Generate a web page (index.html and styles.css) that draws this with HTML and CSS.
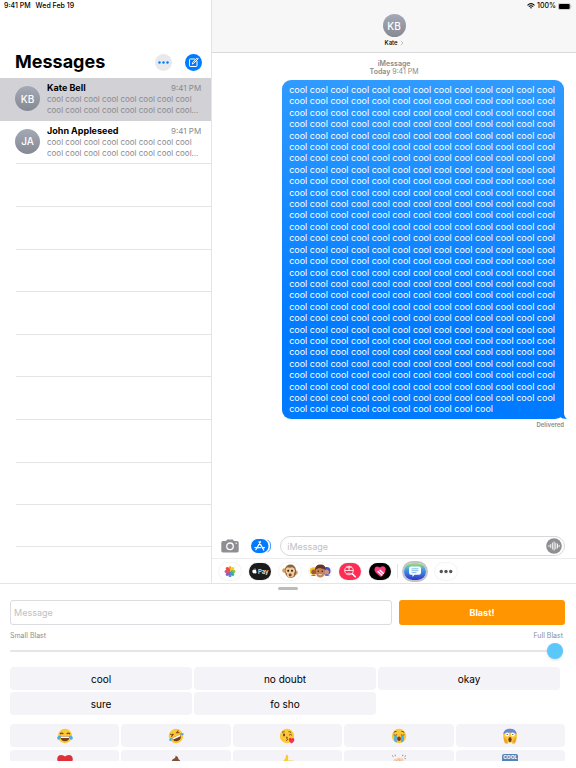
FILE: index.html
```html
<!DOCTYPE html>
<html lang="en">
<head>
    <meta charset="UTF-8">
    <meta name="viewport" content="width=device-width, initial-scale=1.0">
    <title>Messages</title>
    <link rel="stylesheet" href="styles.css">
</head>
<body>
    <main class="messages">
        <aside class="sidebar">
            <div class="status">
                <span>9:41 PM</span>
                <span>Wed Feb 19</span>
            </div>
            <div class="sidebar-header">
                <h1>Messages</h1>
                <button class="round-button more" aria-label="More">
                    <svg viewBox="0 0 17 17"><g fill="#007aff"><circle cx="4.5" cy="8.5" r="1.2"/><circle cx="8.5" cy="8.5" r="1.2"/><circle cx="12.5" cy="8.5" r="1.2"/></g></svg>
                </button>
                <button class="round-button compose" aria-label="New message">
                    <svg viewBox="0 0 17 17"><g fill="none" stroke="#fff" stroke-width="1" stroke-linecap="round" stroke-linejoin="round"><path d="M9.8 5H5.2q-.7 0-.7.7v6.1q0 .7.7.7h6.1q.7 0 .7-.7V7.4"/><path d="M7.4 9.7l.4-1.3 4.5-4.5.9.9-4.5 4.5z"/></g></svg>
                </button>
            </div>
            <div class="chat-list">
                <a class="chat selected" href="#kate">
                    <span class="avatar">KB</span>
                    <span class="chat-text">
                        <span class="chat-top"><b>Kate Bell</b><time>9:41 PM</time></span>
                        <span class="preview">cool cool cool cool cool cool cool cool<br>cool cool cool cool cool cool cool cool…</span>
                    </span>
                </a>
                <a class="chat" href="#john">
                    <span class="avatar">JA</span>
                    <span class="chat-text">
                        <span class="chat-top"><b>John Appleseed</b><time>9:41 PM</time></span>
                        <span class="preview">cool cool cool cool cool cool cool cool<br>cool cool cool cool cool cool cool cool…</span>
                    </span>
                </a>
                <div class="empty-row"></div>
                <div class="empty-row"></div>
                <div class="empty-row"></div>
                <div class="empty-row"></div>
                <div class="empty-row"></div>
                <div class="empty-row"></div>
                <div class="empty-row"></div>
                <div class="empty-row"></div>
                <div class="empty-row"></div>
            </div>
        </aside>

        <section class="conversation">
            <header class="conversation-header">
                <div class="status status-right">
                    <svg class="wifi" viewBox="0 0 8 6"><g fill="none" stroke="#000" stroke-width="1.1"><path d="M.5 2.3q3.5-3.2 7 0"/><path d="M1.8 3.7q2.2-1.9 4.4 0"/></g><path d="M2.9 4.6q1.1-.9 2.2 0L4 5.8z"/></svg>
                    <span>100%</span>
                    <svg class="battery" viewBox="0 0 14 7"><rect x=".3" y=".3" width="12" height="6.4" rx="1.6" fill="none" stroke="#999" stroke-width=".5"/><rect x=".9" y=".9" width="10.8" height="5.2" rx="1.1"/><path d="M13 2.4q.9 1.1 0 2.2z" fill="#999"/></svg>
                </div>
                <span class="avatar">KB</span>
                <a class="contact" href="#kate">Kate
                    <svg viewBox="0 0 4 6"><path d="M.8.8L3 3 .8 5.2" fill="none" stroke="#aaa" stroke-width=".7"/></svg>
                </a>
            </header>

            <div class="thread">
                <p class="stamp"><b>iMessage</b><br><b>Today</b> 9:41 PM</p>
                <div class="bubble">
                    <span>cool cool cool cool cool cool cool cool cool cool cool cool cool</span>
                    <span>cool cool cool cool cool cool cool cool cool cool cool cool cool</span>
                    <span>cool cool cool cool cool cool cool cool cool cool cool cool cool</span>
                    <span>cool cool cool cool cool cool cool cool cool cool cool cool cool</span>
                    <span>cool cool cool cool cool cool cool cool cool cool cool cool cool</span>
                    <span>cool cool cool cool cool cool cool cool cool cool cool cool cool</span>
                    <span>cool cool cool cool cool cool cool cool cool cool cool cool cool</span>
                    <span>cool cool cool cool cool cool cool cool cool cool cool cool cool</span>
                    <span>cool cool cool cool cool cool cool cool cool cool cool cool cool</span>
                    <span>cool cool cool cool cool cool cool cool cool cool cool cool cool</span>
                    <span>cool cool cool cool cool cool cool cool cool cool cool cool cool</span>
                    <span>cool cool cool cool cool cool cool cool cool cool cool cool cool</span>
                    <span>cool cool cool cool cool cool cool cool cool cool cool cool cool</span>
                    <span>cool cool cool cool cool cool cool cool cool cool cool cool cool</span>
                    <span>cool cool cool cool cool cool cool cool cool cool cool cool cool</span>
                    <span>cool cool cool cool cool cool cool cool cool cool cool cool cool</span>
                    <span>cool cool cool cool cool cool cool cool cool cool cool cool cool</span>
                    <span>cool cool cool cool cool cool cool cool cool cool cool cool cool</span>
                    <span>cool cool cool cool cool cool cool cool cool cool cool cool cool</span>
                    <span>cool cool cool cool cool cool cool cool cool cool cool cool cool</span>
                    <span>cool cool cool cool cool cool cool cool cool cool cool cool cool</span>
                    <span>cool cool cool cool cool cool cool cool cool cool cool cool cool</span>
                    <span>cool cool cool cool cool cool cool cool cool cool cool cool cool</span>
                    <span>cool cool cool cool cool cool cool cool cool cool cool cool cool</span>
                    <span>cool cool cool cool cool cool cool cool cool cool cool cool cool</span>
                    <span>cool cool cool cool cool cool cool cool cool cool cool cool cool</span>
                    <span>cool cool cool cool cool cool cool cool cool cool cool cool cool</span>
                    <span>cool cool cool cool cool cool cool cool cool cool cool cool cool</span>
                    <span>cool cool cool cool cool cool cool cool cool cool</span>
                    <svg class="tail" viewBox="0 0 10 9"><path d="M7 0v4q.5 3.500 3 4.700Q6 9.200 3.500 7.200L0 8V0z" fill="#007aff"/></svg>
                </div>
                <p class="delivered">Delivered</p>
            </div>

            <div class="compose-bar">
                <button class="icon-button camera" aria-label="Camera">
                    <svg viewBox="0 0 18 14"><path d="M2 2h3l1.200-1.600h5.600L13 2h3q1.700 0 1.700 1.700v8q0 1.700-1.700 1.700H2Q.3 13.400.3 11.700v-8Q.3 2 2 2z" fill="#8e8e93"/><circle cx="9" cy="7.300" r="3.300" fill="none" stroke="#fff" stroke-width="1.300"/><circle cx="15.200" cy="4.200" r=".7" fill="#fff"/></svg>
                </button>
                <button class="icon-button store" aria-label="Apps">
                    <svg viewBox="0 0 20 14"><rect width="17.500" height="14" rx="7" fill="#007aff"/><path d="M16.500.8q3.200 2 3.200 6.200t-3.200 6.200" fill="none" stroke="#007aff" stroke-width=".8"/><g stroke="#fff" stroke-width="1.300" stroke-linecap="round" fill="none"><path d="M9.500 2.800L5.700 9.400M8 2.800l3.900 6.800M4 8.600h5.500M11.700 8.600h1.800M4.900 10.700l.2-.3M12.500 10.700l.2.300"/></g></svg>
                </button>
                <div class="message-field">
                    <input type="text" placeholder="iMessage" aria-label="iMessage">
                    <button class="icon-button audio" aria-label="Record audio">
                        <svg viewBox="0 0 16 16"><circle cx="8" cy="8" r="7.800" fill="#8e8e93"/><g stroke="#fff" stroke-width=".9" stroke-linecap="round"><path d="M3 7.500v1M4.700 6.500v3M6.400 5v6M8.100 3.800v8.400M9.800 5.200v5.600M11.500 6v4M13.100 7.300v1.400"/></g></svg>
                    </button>
                </div>
            </div>

            <nav class="app-strip">
                <button class="app" aria-label="Photos">
                    <svg viewBox="0 0 22 17"><ellipse cx="11" cy="5.600" rx="1.700" ry="2.700" fill="#ff9c1a"/><ellipse cx="11" cy="5.600" rx="1.700" ry="2.700" fill="#f7cf25" transform="rotate(45 11 8.500)"/><ellipse cx="11" cy="5.600" rx="1.700" ry="2.700" fill="#8ac249" transform="rotate(90 11 8.500)"/><ellipse cx="11" cy="5.600" rx="1.700" ry="2.700" fill="#42b08c" transform="rotate(135 11 8.500)"/><ellipse cx="11" cy="5.600" rx="1.700" ry="2.700" fill="#4a90e2" transform="rotate(180 11 8.500)"/><ellipse cx="11" cy="5.600" rx="1.700" ry="2.700" fill="#8463bd" transform="rotate(225 11 8.500)"/><ellipse cx="11" cy="5.600" rx="1.700" ry="2.700" fill="#d0598e" transform="rotate(270 11 8.500)"/><ellipse cx="11" cy="5.600" rx="1.700" ry="2.700" fill="#ef4c3c" transform="rotate(315 11 8.500)"/></svg>
                </button>
                <button class="app pay" aria-label="Apple Pay">
                    <svg viewBox="0 0 6 7"><path d="M3 1.900q1.500-.7 2.400.3-1.500 1.200.3 2.500Q4.900 6.800 4 6.500q-.9-.4-1.800 0Q.8 6.500.4 4.200.2 1.500 3 1.900zM2.900 1.500Q3 .2 4.200 0q0 1.300-1.300 1.500z" fill="#fff"/></svg>Pay
                </button>
                <button class="app" aria-label="Animoji">
                    <svg viewBox="0 0 22 17"><circle cx="5.500" cy="7.500" r="2.300" fill="#d69a60"/><circle cx="16.500" cy="9.500" r="2.300" fill="#d69a60"/><path d="M6 6q1-4.500 5.500-4.500T17 7q.7 4-1.300 6.500-3.200 2.700-7 .5Q5.500 11.500 6 6z" fill="#8a6240"/><path d="M6.500 7q.7-4 4.200-2.300 4.500-1.700 5.300 2.300 0 2-.8 3.200 0 4.300-3.800 4.300-3.900 0-3.600-4.100Q6 9 6.500 7z" fill="#f1cb96"/><circle cx="9.200" cy="7.700" r="1" fill="#261b12"/><circle cx="13" cy="7.700" r="1" fill="#261b12"/><ellipse cx="11.200" cy="12" rx="1.500" ry="1.400" fill="#843b32"/></svg>
                </button>
                <button class="app" aria-label="Memoji">
                    <svg viewBox="0 0 22 17"><circle cx="4.500" cy="8" r="3.800" fill="#f7bf25"/><circle cx="4.800" cy="9" r="2.500" fill="#9c5b35"/><circle cx="17.600" cy="8" r="3.900" fill="#4949d2"/><circle cx="17.500" cy="9" r="2.500" fill="#cf986e"/><path d="M1.500 13q3-2 6 0zM15 13q3-2 6 0z" fill="#5d65cf"/><path d="M6 7q0-5.500 5.500-5.500T16.500 7z" fill="#63362a"/><path d="M7 6q4-2 8.500 0v4.200q-.8 4.300-4.200 4.300T7 10.200z" fill="#c68255"/><path d="M6.500 5.500Q8 1.500 12 2q4 .3 4 4-4-.3-6-1.500Q9 6 6.500 5.500z" fill="#61332a"/><circle cx="9.300" cy="8.200" r=".7" fill="#25160e"/><circle cx="13.200" cy="8.200" r=".7" fill="#25160e"/><path d="M9.200 11q2 .8 4.100 0-2 2.400-4.100 0z" fill="#fff"/></svg>
                </button>
                <button class="app images" aria-label="Images">
                    <svg viewBox="0 0 22 17"><g fill="none" stroke="#fff" stroke-width=".8"><circle cx="10" cy="7.500" r="4.300"/><path d="M5.700 7.500h8.600M10 3.200v4.300M7.500 4q2.500 1.800 5 0M7.500 11q2.500-1.800 5 0"/><path d="M13.300 10.800l3 3" stroke-width="1.500" stroke-linecap="round"/></g></svg>
                </button>
                <button class="app touch" aria-label="Digital Touch">
                    <svg viewBox="0 0 22 17"><path d="M12 14Q4.500 9 5.500 5.800 7 2 10.700 4.600 15 1.500 16.600 5.300 17.500 9.500 12 14z" fill="#ff397f"/><path d="M9 8.500l3.800 3.500M11 7.200l3.200 3" stroke="#fff" stroke-width="1.500" stroke-linecap="round"/></svg>
                </button>
                <span class="divider"></span>
                <button class="app blast" aria-label="Message Blast">
                    <svg viewBox="0 0 22 17"><path d="M7 3.500h8q2 0 2 2v4.300q0 2-2 2h-4.500L8.500 14v-2.200H7q-2 0-2-2V5.500q0-2 2-2z" fill="#fff"/><path d="M7.500 5.800h7M7.500 7.700h7M7.500 9.600h5" stroke="#5babe5" stroke-width=".8"/></svg>
                </button>
                <button class="app" aria-label="More apps">
                    <svg viewBox="0 0 22 17"><g fill="#55555a"><circle cx="6.300" cy="8.500" r="1.700"/><circle cx="11" cy="8.500" r="1.700"/><circle cx="15.700" cy="8.500" r="1.700"/></g></svg>
                </button>
            </nav>
        </section>
    </main>

    <section class="panel">
        <div class="grabber"></div>
        <div class="send-row">
            <input class="blast-text" type="text" placeholder="Message" aria-label="Message">
            <button class="send">Blast!</button>
        </div>
        <div class="slider">
            <div class="slider-labels">
                <label for="size">Small Blast</label>
                <label for="size">Full Blast</label>
            </div>
            <input type="range" id="size" min="0" max="100" value="100">
        </div>
        <div class="words">
            <button>cool</button>
            <button>no doubt</button>
            <button>okay</button>
            <button>sure</button>
            <button>fo sho</button>
        </div>
        <div class="emojis">
            <button aria-label="Tears of joy">
                <svg viewBox="0 0 16 16"><circle cx="8" cy="8" r="7.200" fill="#fdc835"/><path d="M3 6.200q1.500-2 3.300-.2M9.700 6q1.800-1.800 3.300.2" fill="none" stroke="#77451b" stroke-width="1.100"/><path d="M3.200 8.300h9.600q-.5 5-4.800 5t-4.800-5z" fill="#77401e"/><path d="M3.600 8.500h8.800l-.4 1.600H4z" fill="#fff"/><path d="M3.600 7.500Q-.5 8 .3 10.700q1.200 2 2.700.3 1-1.500.6-3.500zM12.400 7.500q4.100.5 3.300 3.200-1.200 2-2.700.3-1-1.500-.6-3.500z" fill="#48aee8"/></svg>
            </button>
            <button aria-label="Rolling laughing">
                <svg viewBox="0 0 16 16"><g transform="rotate(-25 8 8)"><circle cx="8" cy="8" r="7.200" fill="#fdc835"/><path d="M3.500 4l2.600 1.300-2.600 1.300M12.500 4L9.900 5.300l2.600 1.300" fill="none" stroke="#77451b" stroke-width="1"/><path d="M3.200 8.300h9.600q-.5 5-4.800 5t-4.800-5z" fill="#77401e"/><path d="M3.600 8.500h8.800l-.4 1.600H4z" fill="#fff"/><path d="M3.600 7.500Q-.5 7.400.2 9.800q1.800 1.500 3.400-2.300zM12.400 7.500q4.100-.1 3.400 2.300-1.800 1.500-3.400-2.300z" fill="#48aee8"/></g></svg>
            </button>
            <button aria-label="Kiss">
                <svg viewBox="0 0 16 16"><circle cx="8" cy="8" r="7.200" fill="#fdc835"/><path d="M3 4.500q1-1.200 2.600-.7M9.500 3.800q1.600-.4 2.600.8M10 7.200q1.500-1.500 3 0" fill="none" stroke="#77451b" stroke-width=".9"/><ellipse cx="5" cy="7" rx="1" ry="1.400" fill="#6a391a"/><path d="M7 9q2.300.2 1 1.500 1.800 1.200-.8 2" fill="none" stroke="#77401e" stroke-width="1"/><path d="M12.300 15.500Q8.800 12 10.200 10.200q1.300-1 2.300.5 1.500-1.500 2.800.2.700 2.200-3 4.600z" fill="#ef334e"/></svg>
            </button>
            <button aria-label="Loudly crying">
                <svg viewBox="0 0 16 16"><circle cx="8" cy="8" r="7.200" fill="#fdc835"/><path d="M2.800 4.500q1.200-1.200 2.800-1.100M13.200 4.500Q12 3.300 10.400 3.400M2.700 6.800q1.700 1 3.400 0M9.900 6.800q1.700 1 3.400 0" fill="none" stroke="#77451b" stroke-width="1"/><path d="M3.200 7.300h2.600v7.300q-1.500-.6-2.600-1.700zM10.200 7.300h2.600v5.600q-1.100 1.100-2.600 1.700z" fill="#48aee8"/><ellipse cx="8" cy="10.800" rx="1.900" ry="2.300" fill="#77401e"/></svg>
            </button>
            <button aria-label="Screaming">
                <svg viewBox="0 0 16 16"><circle cx="8" cy="7.800" r="7" fill="#fdc835"/><path d="M1.200 6Q2 .8 8 .8T14.800 6q-3-1.500-6.800-1.500T1.200 6z" fill="#6688dd"/><circle cx="5.200" cy="6.500" r="1.900" fill="#fff"/><circle cx="10.800" cy="6.500" r="1.900" fill="#fff"/><circle cx="5.200" cy="6.500" r=".6" fill="#222"/><circle cx="10.800" cy="6.500" r=".6" fill="#222"/><ellipse cx="8" cy="11.400" rx="1.600" ry="2.500" fill="#68351d"/><path d="M1.500 9q2 .2 3.500 3.200L6 15.500H3.200Q1.500 13 1.500 9zM14.500 9q-2 .2-3.500 3.200l-1 3.300h2.800q1.700-2.500 1.700-6.500z" fill="#efa52b"/></svg>
            </button>
            <button aria-label="Heart">
                <svg viewBox="0 0 16 16"><path d="M8 15Q.3 9.500.2 5 .5 1 4.200 1 6.800 1 8 2.500 9.200 1 11.800 1q3.700 0 4 4Q15.700 9.500 8 15z" fill="#df3039"/></svg>
            </button>
            <button aria-label="Poop">
                <svg viewBox="0 0 16 16"><path d="M7.500 1.500q3.300 1.200 3 3.800 2 .8 1.700 3 3 1 2.300 4-1 2.500-6.500 2.500t-6.500-2.500q-.5-3 2.300-4-.4-2.700 2-3.500Q8 4 7.500 1.500z" fill="#80503b"/><circle cx="6" cy="8.500" r="1.300" fill="#fff"/><circle cx="10" cy="8.500" r="1.300" fill="#fff"/></svg>
            </button>
            <button aria-label="Thumbs up">
                <svg viewBox="0 0 16 16"><path d="M7 1q2-.6 2.200 1.600.2 2-.6 3.900h4.800q1.700.5 1.200 2.500.3 5-2.600 5.500H6.500L2 13V8l3-1.500Q7.200 4 7 1z" fill="#fdc835"/></svg>
            </button>
            <button aria-label="Clap">
                <svg viewBox="0 0 16 16"><path d="M1 1.500l1.500 1.200M4 .7l.5 1.500M12 .7l-.5 1.500M15 1.500l-1.500 1.200M14.800 4.500l-1.300.2" stroke="#777" stroke-width=".8"/><path d="M2 7.500Q3 4 5 5l3-1.800 1.500 1.300 2-.4 2.500 5q.5 5-4 6-4.500.5-6.500-3.500z" fill="#f7cfae"/><path d="M5 6l4 4M7.500 5l3.500 4M3.500 8.500l3.500 4" stroke="#dba17d" stroke-width=".7"/></svg>
            </button>
            <button class="cool-badge" aria-label="Cool"><span><b>COOL</b></span></button>
        </div>
    </section>
</body>
</html>
```
FILE: styles.css
```css
* {
    box-sizing: border-box;
}

body {
    font-family: Inter, "Liberation Sans", sans-serif;
    background-color: #fff;
    color: #000;
    margin: 0;
    height: 100vh;
    display: flex;
    flex-direction: column;
    overflow: hidden;
}

h1, p {
    margin: 0;
}

button, input {
    font-family: inherit;
    margin: 0;
}

button {
    border: none;
    padding: 0;
    background: none;
    color: #000;
}

svg {
    display: block;
}

a {
    color: inherit;
    text-decoration: none;
}

.messages {
    flex: 1;
    min-height: 0;
    display: grid;
    grid-template-columns: 7fr 12fr;
}

/* Left column */
.sidebar {
    display: flex;
    flex-direction: column;
    border-right: 1px solid #e4e4e6;
}

.status {
    display: flex;
    gap: 5px;
    height: 12px;
    padding: 0 4px;
    font-size: 7px;
    line-height: 12px;
    font-weight: 500;
}

.sidebar-header {
    display: flex;
    align-items: center;
    gap: 13px;
    padding: 38px 9px 4px 15px;
}

.sidebar-header h1 {
    flex: 1;
    font-size: 18px;
    line-height: 24px;
}

.round-button {
    width: 17px;
    height: 17px;
    border-radius: 50%;
}

.more {
    background-color: #e9e9eb;
}

.compose {
    background-color: #007aff;
}

.chat-list {
    flex: 1;
    display: grid;
    grid-template-rows: repeat(11, 1fr);
    padding-bottom: 36px;
}

.chat {
    display: flex;
    gap: 7px;
    padding: 4px 10px 0 15px;
}

.selected {
    background-color: #d1d1d6;
}

.avatar {
    display: flex;
    align-items: center;
    justify-content: center;
    width: 25px;
    height: 25px;
    border-radius: 50%;
    background: linear-gradient(#a4a9b7, #858993);
    color: #fff;
    font-size: 10px;
    font-weight: 500;
}

.chat .avatar {
    margin-top: 4px;
}

.chat-text {
    flex: 1;
    font-size: 8px;
    line-height: 11px;
    color: #8a8a8e;
}

.chat-top {
    display: flex;
    justify-content: space-between;
    line-height: 12px;
}

.chat-top b {
    font-size: 9px;
    font-weight: 700;
    color: #000;
}

.preview {
    display: block;
    white-space: nowrap;
}

.empty-row {
    margin-left: 16px;
    border-top: 1px solid #e4e4e6;
}

.empty-row:last-child {
    border-bottom: 1px solid #e4e4e6;
}

/* Right column */
.conversation {
    display: flex;
    flex-direction: column;
    min-width: 0;
}

.conversation-header {
    display: flex;
    flex-direction: column;
    align-items: center;
    height: 53px;
    background-color: #f7f7f7;
    border-bottom: 1px solid #d9d9db;
}

.conversation-header .avatar {
    width: 23px;
    height: 23px;
    margin-top: 2px;
}

.status-right {
    align-self: flex-end;
    align-items: center;
    gap: 2px;
}

.wifi {
    width: 8px;
    height: 6px;
}

.battery {
    width: 14px;
    height: 7px;
}

.contact {
    display: flex;
    align-items: center;
    gap: 2px;
    font-size: 6px;
    line-height: 12px;
    font-weight: 500;
}

.contact svg {
    width: 4px;
    height: 6px;
}

.thread {
    flex: 1;
    display: flex;
    flex-direction: column;
    padding: 7px 12px 105px;
}

.stamp {
    margin-bottom: 4px;
    text-align: center;
    color: #8a8a8e;
    font-size: 7px;
    line-height: 8px;
}

.stamp b {
    font-weight: 600;
}

.bubble {
    flex: 1;
    align-self: flex-end;
    position: relative;
    display: flex;
    flex-direction: column;
    padding: 4px 9px 4px 7px;
    border-radius: 9px;
    background: linear-gradient(#2f9bff, #007aff 75%);
    color: #fff;
    font-size: 9px;
    line-height: 11px;
    white-space: nowrap;
}

.bubble span {
    flex: 1;
}

.tail {
    position: absolute;
    right: -3px;
    bottom: 0;
    width: 10px;
    height: 9px;
}

.delivered {
    text-align: right;
    color: #8a8a8e;
    font-size: 6px;
    line-height: 12px;
    font-weight: 600;
}

.compose-bar {
    display: flex;
    align-items: center;
    gap: 12px;
    padding: 0 11px 2px 9px;
}

.camera svg {
    width: 18px;
    height: 14px;
}

.store svg {
    width: 20px;
    height: 14px;
}

.message-field {
    flex: 1;
    display: flex;
    align-items: center;
    height: 20px;
    margin-left: -3px;
    padding: 0 2px 0 6px;
    border: 1px solid #d8d8dc;
    border-radius: 10px;
}

.message-field input {
    flex: 1;
    min-width: 0;
    border: none;
    padding: 0;
    font-size: 9px;
    outline: none;
}

input::placeholder {
    color: #c0c0c4;
}

.audio svg {
    width: 16px;
    height: 16px;
}

.app-strip {
    display: flex;
    align-items: center;
    gap: 8px;
    height: 25px;
    padding-left: 7px;
    border-top: 1px solid #ececee;
}

.app {
    width: 22px;
    height: 17px;
    border-radius: 9px;
    box-shadow: 0 0 0 1px #f4f4f5;
}

.pay {
    display: flex;
    align-items: center;
    justify-content: center;
    gap: 1px;
    background-color: #1c1c1c;
    color: #fff;
    font-size: 6px;
    font-weight: 500;
}

.pay svg {
    width: 5px;
    height: 6px;
}

.images {
    background-color: #ff2d55;
}

.touch {
    background-color: #000;
}

.divider {
    width: 1px;
    height: 14px;
    margin: 0 -3px 0 -2px;
    background-color: #e4e4e6;
}

.blast {
    margin: 0 1px;
    background: linear-gradient(#a8e66a, #3f9ce8 40%, #3033c9);
    box-shadow: 0 0 0 2px #c3c3c6;
}

/* Blast keyboard */
.panel {
    display: flex;
    flex-direction: column;
    height: 178px;
    margin-bottom: 7px;
    padding: 3px 11px 0 10px;
    border-top: 1px solid #e4e4e6;
    overflow: hidden;
}

.grabber {
    align-self: center;
    flex: none;
    width: 20px;
    height: 3px;
    border-radius: 2px;
    background-color: #bcbcbe;
}

.send-row {
    display: grid;
    grid-template-columns: 23fr 10fr;
    gap: 7px;
    margin-top: 10px;
}

.blast-text {
    height: 25px;
    min-width: 0;
    padding: 0 3px;
    border: 1px solid #dcdce0;
    border-radius: 3px;
    font-size: 9px;
}

.send {
    height: 25px;
    border-radius: 3px;
    background-color: #ff9500;
    color: #fff;
    font-size: 9px;
    font-weight: 700;
}

.slider {
    margin-top: 5px;
    padding-right: 2px;
}

.slider-labels {
    display: flex;
    justify-content: space-between;
    font-size: 7px;
    line-height: 12px;
    color: #8e8e93;
}

.slider input {
    display: block;
    width: 100%;
    height: 16px;
    margin-top: 1px;
    background: none;
    -webkit-appearance: none;
    appearance: none;
}

.slider input::-webkit-slider-runnable-track {
    height: 2px;
    border-radius: 1px;
    background-color: #e5e5ea;
}

.slider input::-webkit-slider-thumb {
    -webkit-appearance: none;
    width: 16px;
    height: 16px;
    margin-top: -7px;
    border-radius: 50%;
    background-color: #5ac8fa;
    box-shadow: 0 1px 3px rgba(0, 0, 0, 0.15);
}

.words, .emojis {
    display: grid;
    grid-auto-rows: 23px;
    gap: 2px;
}

.words {
    grid-template-columns: repeat(3, 1fr);
    margin-top: 8px;
    padding-right: 5px;
}

.emojis {
    grid-template-columns: repeat(5, 1fr);
    row-gap: 3px;
    margin-top: 9px;
}

.words button, .emojis button {
    display: flex;
    align-items: center;
    justify-content: center;
    border-radius: 4px;
    background-color: #f3f3f8;
    font-size: 10px;
}

.emojis svg {
    width: 16px;
    height: 16px;
}

.cool-badge span {
    display: flex;
    justify-content: center;
    align-items: flex-start;
    width: 16px;
    height: 16px;
    border-radius: 2px;
    background-color: #5486b5;
    color: #fff;
    font-size: 5px;
    line-height: 7px;
}
```
